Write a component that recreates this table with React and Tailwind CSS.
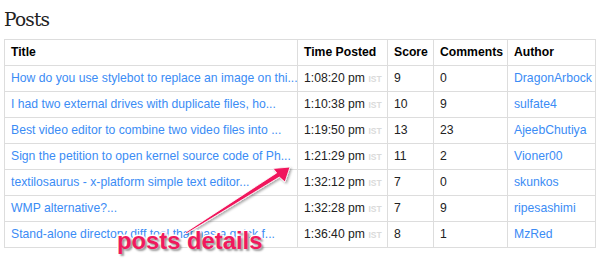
import React from 'react';

const posts = [
  { title: 'How do you use stylebot to replace an image on thi...', time: '1:08:20 pm', score: 9, comments: 0, author: 'DragonArbock' },
  { title: 'I had two external drives with duplicate files, ho...', time: '1:10:38 pm', score: 10, comments: 9, author: 'sulfate4' },
  { title: 'Best video editor to combine two video files into ...', time: '1:19:50 pm', score: 13, comments: 23, author: 'AjeebChutiya' },
  { title: 'Sign the petition to open kernel source code of Ph...', time: '1:21:29 pm', score: 11, comments: 2, author: 'Vioner00' },
  { title: 'textilosaurus - x-platform simple text editor...', time: '1:32:12 pm', score: 7, comments: 0, author: 'skunkos' },
  { title: 'WMP alternative?...', time: '1:32:28 pm', score: 7, comments: 9, author: 'ripesashimi' },
  { title: 'Stand-alone directory diff tool that has a quick f...', time: '1:36:40 pm', score: 8, comments: 1, author: 'MzRed' },
];

export default function App() {
  return (
    <div className="relative w-[600px] h-[258px] bg-white overflow-hidden font-['Liberation_Sans',Arial,sans-serif]">
      <div className="px-1 pt-[7px]">
        <h2 className="text-[18.5px] leading-[26px] text-[#222] font-['DejaVu_Serif',serif] tracking-[-0.8px] mb-[6px]">Posts</h2>
        <table className="border-collapse text-[12.2px] text-[#222] w-[591px] table-fixed">
          <colgroup>
            <col className="w-[293px]" />
            <col className="w-[90px]" />
            <col className="w-[46px]" />
            <col className="w-[74px]" />
            <col className="w-[88px]" />
          </colgroup>
          <thead>
            <tr className="h-[26px]">
              {['Title', 'Time Posted', 'Score', 'Comments', 'Author'].map((h) => (
                <th key={h} className="border border-[#ddd] px-[6px] text-left font-bold text-black whitespace-nowrap">{h}</th>
              ))}
            </tr>
          </thead>
          <tbody>
            {posts.map((p) => (
              <tr key={p.time} className="h-[26px]">
                <td className="border border-[#ddd] px-[6px] text-[#3b8cf5] whitespace-nowrap overflow-hidden">{p.title}</td>
                <td className="border border-[#ddd] px-[6px] whitespace-nowrap">
                  {p.time} <span className="text-[8.5px] font-bold text-[#dadada]">IST</span>
                </td>
                <td className="border border-[#ddd] px-[6px]">{p.score}</td>
                <td className="border border-[#ddd] px-[6px]">{p.comments}</td>
                <td className="border border-[#ddd] px-[6px] text-[#3b8cf5] whitespace-nowrap">{p.author}</td>
              </tr>
            ))}
          </tbody>
        </table>
      </div>

      {/* annotation */}
      <svg className="absolute left-0 top-0 pointer-events-none" width="600" height="258">
        <defs>
          <filter id="sh" x="-20%" y="-20%" width="140%" height="140%">
            <feDropShadow dx="1.5" dy="1.5" stdDeviation="1" floodColor="#000" floodOpacity="0.35" />
          </filter>
        </defs>
        <g filter="url(#sh)">
          <path d="M185.5 232.4 L276.7 172.9 L273 168.5 L290 167 L285 182 L279.3 177.1 L186.5 233.6 Z" fill="#f0195d" stroke="#fff" strokeWidth="0.8" strokeLinejoin="round" />
        </g>
      </svg>
      <div className="absolute left-[117px] top-[227px] text-[23.8px] leading-[28px] font-bold text-[#f0195d] [paint-order:stroke] [-webkit-text-stroke:3px_white] [text-shadow:2px_2px_2px_rgba(0,0,0,0.4)]">
        posts details
      </div>
    </div>
  );
}
